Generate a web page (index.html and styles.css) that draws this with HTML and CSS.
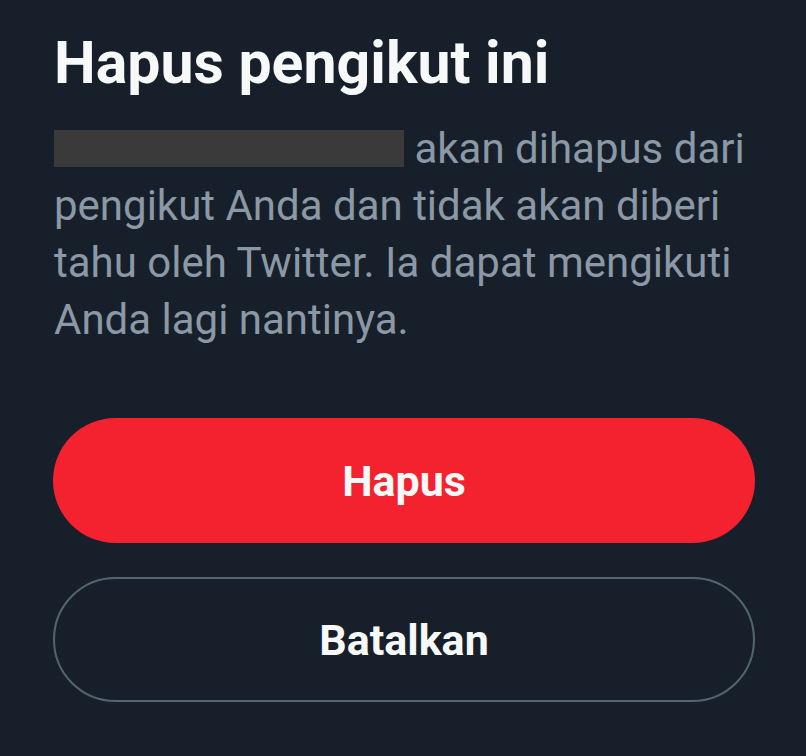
FILE: index.html
```html
<!DOCTYPE html>
<html lang="id">
<head>
    <meta charset="UTF-8">
    <title>Hapus pengikut ini</title>
    <link rel="stylesheet" href="styles.css">
</head>
<body>
    <div class="dialog">
        <h1 class="dialog-title">Hapus pengikut ini</h1>
        <p class="dialog-text"><span class="redacted"></span> akan dihapus dari pengikut Anda dan tidak akan diberi tahu oleh Twitter. Ia dapat mengikuti Anda lagi nantinya.</p>
        <div class="dialog-actions">
            <button class="btn btn-danger">Hapus</button>
            <button class="btn btn-outline">Batalkan</button>
        </div>
    </div>
</body>
</html>
```

FILE: styles.css
```css
/* Dialog hapus pengikut */
body {
    margin: 0;
    padding: 0;
    background-color: #17202a;
    font-family: Roboto, "Liberation Sans", sans-serif;
    color: #f7f9f9;
}

.dialog {
    padding: 28px 51px 0 54px;
}

.dialog-title {
    font-size: 59px;
    font-weight: 700;
    margin: 0;
    line-height: 70px;
}

.dialog-text {
    font-size: 42px;
    line-height: 57px;
    color: #8b98a5;
    margin: 22px 0 0 0;
}

.redacted {
    display: inline-block;
    width: 350px;
    height: 37px;
    background-color: #3a3a3a;
    vertical-align: -4px;
}

.dialog-actions {
    display: flex;
    flex-direction: column;
    gap: 34px;
    margin-top: 70px;
    margin-left: -1px;
}

.btn {
    height: 125px;
    border-radius: 63px;
    font-family: Roboto, "Liberation Sans", sans-serif;
    font-size: 43px;
    font-weight: 700;
    color: #f7f9f9;
    cursor: pointer;
}

.btn-danger {
    background-color: #f4212e;
    border: none;
}

.btn-outline {
    background-color: transparent;
    border: 2px solid #536471;
}
```
